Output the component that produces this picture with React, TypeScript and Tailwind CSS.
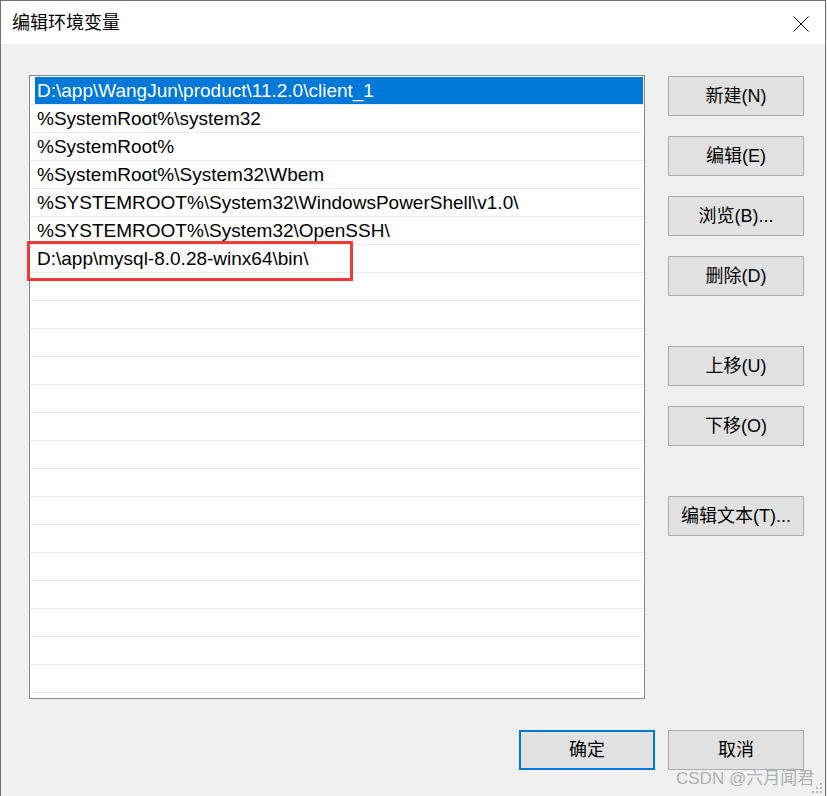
const paths = [
  "D:\\app\\WangJun\\product\\11.2.0\\client_1",
  "%SystemRoot%\\system32",
  "%SystemRoot%",
  "%SystemRoot%\\System32\\Wbem",
  "%SYSTEMROOT%\\System32\\WindowsPowerShell\\v1.0\\",
  "%SYSTEMROOT%\\System32\\OpenSSH\\",
  "D:\\app\\mysql-8.0.28-winx64\\bin\\",
];

const rows = [...paths, ...Array.from({ length: 22 - paths.length }, () => "")];

function WinButton({ label, primary = false }: { label: string; primary?: boolean }) {
  return (
    <button
      type="button"
      className={
        primary
          ? "w-[136px] h-[40px] bg-[#e1e1e1] border-2 border-[#0078d7] text-[18px] text-black leading-none"
          : "w-[136px] h-[40px] bg-[#e1e1e1] border border-[#adadad] text-[18px] text-black leading-none"
      }
    >
      {label}
    </button>
  );
}

export default function App() {
  return (
    <div
      className="relative w-[827px] h-[796px] bg-[#f0f0f0] overflow-hidden"
      style={{ fontFamily: '"Liberation Sans", "Noto Sans CJK SC", sans-serif' }}
    >
      <div className="w-[826px] h-full border-l border-t border-r border-[#707070] flex flex-col">
        <div className="h-[43px] bg-white flex items-center justify-between pl-[11px] pr-[16px]">
          <span className="text-[18px] text-black mt-[2px]">编辑环境变量</span>
          <svg width="16" height="16" viewBox="0 0 16 16" className="mt-[2px]">
            <path d="M0.5 0.5 L15.5 15.5 M15.5 0.5 L0.5 15.5" stroke="#000" strokeWidth="1" fill="none" />
          </svg>
        </div>

        <div className="flex-1 pl-[28px] pt-[31px]">
          <div className="flex gap-[23px]">
            <div className="w-[616px] h-[624px] bg-white border border-[#828790] pt-[1px] px-[1px]">
              {rows.map((p, i) => (
                <div key={i} className="h-[28px] border-b border-[#ebebeb] flex">
                  {i === 0 ? (
                    <div className="ml-[4px] flex-1 h-[27px] bg-[#0078d7] text-white text-[19px] flex items-center pl-[2px] pt-[2px] whitespace-nowrap">
                      {p}
                    </div>
                  ) : (
                    <div className="pl-[6px] h-[27px] text-black text-[19px] flex items-center pt-[2px] whitespace-nowrap">
                      {p}
                    </div>
                  )}
                </div>
              ))}
            </div>

            <div className="flex flex-col pt-[1px]">
              <div className="flex flex-col gap-[20px]">
                <WinButton label="新建(N)" />
                <WinButton label="编辑(E)" />
                <WinButton label="浏览(B)..." />
                <WinButton label="删除(D)" />
              </div>
              <div className="flex flex-col gap-[20px] mt-[50px]">
                <WinButton label="上移(U)" />
                <WinButton label="下移(O)" />
              </div>
              <div className="mt-[50px]">
                <WinButton label="编辑文本(T)..." />
              </div>
            </div>
          </div>

          <div className="flex justify-end gap-[13px] pr-[21px] mt-[31px]">
            <WinButton label="确定" primary />
            <WinButton label="取消" />
          </div>
        </div>
      </div>

      <div className="absolute left-[27px] top-[241px] w-[326px] h-[40px] border-[3px] border-[#f03a3a]" />

      <div className="absolute left-[676px] top-[766px] text-[17px] text-[#b0b0b0] whitespace-nowrap">
        CSDN @六月闻君
      </div>

      <svg className="absolute left-[812px] top-[783px]" width="11" height="11" viewBox="0 0 11 11">
        <rect x="8" y="0" width="2" height="2" fill="#b8b8b8" />
        <rect x="4" y="4" width="2" height="2" fill="#b8b8b8" />
        <rect x="8" y="4" width="2" height="2" fill="#b8b8b8" />
        <rect x="0" y="8" width="2" height="2" fill="#b8b8b8" />
        <rect x="4" y="8" width="2" height="2" fill="#b8b8b8" />
        <rect x="8" y="8" width="2" height="2" fill="#b8b8b8" />
      </svg>
    </div>
  );
}
